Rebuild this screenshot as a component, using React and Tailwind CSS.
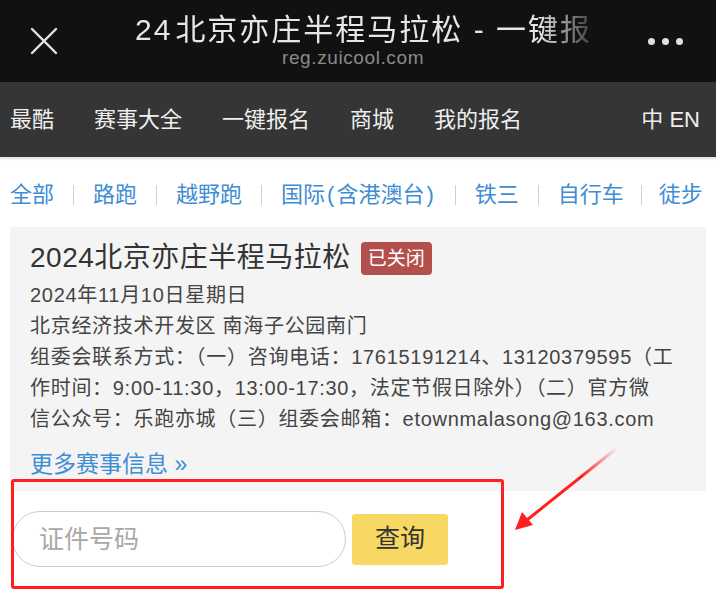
import { useState } from "react";

const navItems = ["最酷", "赛事大全", "一键报名", "商城", "我的报名"];

const App = () => {
  const [idNo, setIdNo] = useState("");

  return (
    <div className="relative w-[716px] h-[606px] overflow-hidden bg-white font-['Liberation_Sans','Noto_Sans_CJK_SC',sans-serif]">
      {/* Browser header */}
      <div className="h-[82px] bg-[#111111] flex items-center">
        <div className="w-[135px] pl-[30px]">
          <svg width="28" height="28" viewBox="0 0 28 28">
            <path d="M2 2 L26 26 M26 2 L2 26" stroke="#e6e6e6" strokeWidth="2.4" strokeLinecap="round" />
          </svg>
        </div>
        <div className="w-[470px] flex flex-col">
          <div className="whitespace-nowrap text-[30px] leading-[34px] tracking-[2px] text-[#e6e6e6] [mask-image:linear-gradient(to_right,black_86%,transparent_100%)]">
            <span className="mr-[3px]">24</span>北京亦庄半程马拉松 - 一键报
          </div>
          <div className="pl-[147px] text-[19px] leading-[22px] tracking-[0.6px] text-[#8a8a8a]">reg.zuicool.com</div>
        </div>
        <div className="ml-auto pr-[33px] flex gap-[7px]">
          <span className="w-[7px] h-[7px] rounded-full bg-[#e0e0e0]" />
          <span className="w-[7px] h-[7px] rounded-full bg-[#e0e0e0]" />
          <span className="w-[7px] h-[7px] rounded-full bg-[#e0e0e0]" />
        </div>
      </div>

      {/* Site nav */}
      <div className="h-[75px] bg-[#353535] flex items-center px-[10px] gap-10 text-[22px] text-[#eeeeee] shadow-[0_2px_2px_rgba(0,0,0,0.12)]">
        {navItems.map((item) => (
          <span key={item}>{item}</span>
        ))}
        <span className="ml-auto pr-[6px]">中 EN</span>
      </div>

      {/* Filters */}
      <div className="h-[70px] pt-[5px] flex items-center pl-[10px] text-[22px] text-[#3f8dd3] whitespace-nowrap">
        <span>全部</span>
        <span className="mx-[19px] w-px h-[20px] bg-[#cfcfcf]" />
        <span>路跑</span>
        <span className="mx-[19px] w-px h-[20px] bg-[#cfcfcf]" />
        <span>越野跑</span>
        <span className="mx-[19px] w-px h-[20px] bg-[#cfcfcf]" />
        <span>
          国际<span className="px-[2px]">(</span>含港澳台<span className="px-[2px]">)</span>
        </span>
        <span className="mx-[19px] w-px h-[20px] bg-[#cfcfcf]" />
        <span>铁三</span>
        <span className="mx-[19px] w-px h-[20px] bg-[#cfcfcf]" />
        <span>自行车</span>
        <span className="mx-[17px] w-px h-[20px] bg-[#cfcfcf]" />
        <span>徒步</span>
      </div>

      {/* Event card */}
      <div className="mx-[10px] bg-[#f4f4f4] px-5 pt-[13px] pb-[12px]">
        <div className="flex items-center gap-[10px]">
          <h1 className="text-[28px] leading-[36px] tracking-[0.5px] text-[#333333]">2024北京亦庄半程马拉松</h1>
          <span className="bg-[#b3504d] text-white text-[19px] leading-[33px] px-[7px] rounded-[4px]">已关闭</span>
        </div>
        <div className="mt-[4px] text-[20px] leading-[31px] tracking-[0.7px] text-[#444444] whitespace-nowrap">
          <p>2024年11月10日星期日</p>
          <p>北京经济技术开发区 南海子公园南门</p>
          <p>组委会联系方式：（一）咨询电话：17615191214、13120379595（工</p>
          <p>作时间：9:00-11:30，13:00-17:30，法定节假日除外）（二）官方微</p>
          <p>信公众号：乐跑亦城（三）组委会邮箱：etownmalasong@163.com</p>
        </div>
        <a className="block mt-[14px] text-[23px] leading-[30px] text-[#3f8dd3]">更多赛事信息 »</a>
      </div>

      {/* Query */}
      <div className="mt-[20px] pl-[12px] flex items-center gap-[6px]">
        <input
          value={idNo}
          onChange={(e) => setIdNo(e.target.value)}
          placeholder="证件号码"
          className="w-[334px] h-[56px] rounded-full border-[1.5px] border-[#cccccc] bg-white pl-[26px] text-[25px] text-[#333] placeholder:text-[#a8a8a8] outline-none"
        />
        <button className="w-[96px] h-[51px] rounded-[3px] bg-[#f6d862] text-[25px] text-[#333333]">查询</button>
      </div>

      {/* Annotation */}
      <div className="absolute left-[11px] top-[479px] w-[493px] h-[110px] border-[3px] border-[#ff1f1f] rounded-[3px]" />
      <svg className="absolute left-0 top-0" width="716" height="606" viewBox="0 0 716 606">
        <defs>
          <linearGradient id="fade" x1="617" y1="448" x2="515" y2="530" gradientUnits="userSpaceOnUse">
            <stop offset="0" stopColor="#ff2020" stopOpacity="0" />
            <stop offset="0.35" stopColor="#ff2020" stopOpacity="1" />
            <stop offset="1" stopColor="#ff2020" stopOpacity="1" />
          </linearGradient>
        </defs>
        <line x1="617" y1="448" x2="527" y2="520" stroke="url(#fade)" strokeWidth="3" />
        <polygon points="515,530 522,512 533,525" fill="#ff2020" />
      </svg>
    </div>
  );
};

export default App;
